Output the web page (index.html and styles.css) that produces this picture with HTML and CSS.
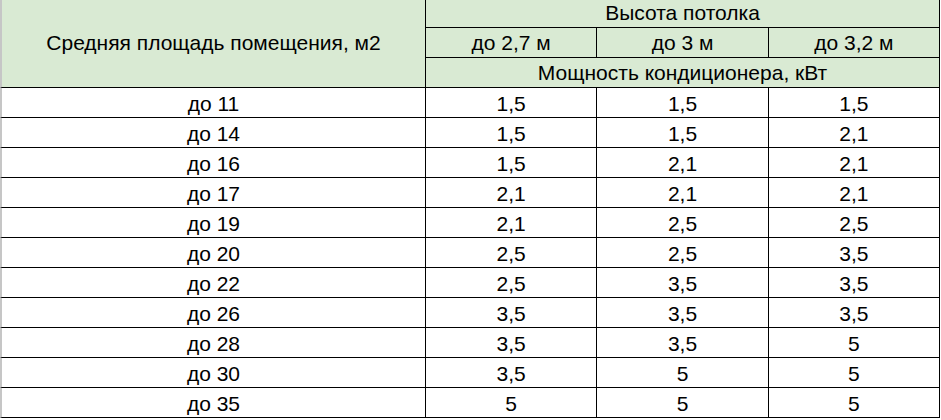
FILE: index.html
```html
<!DOCTYPE html>
<html lang="ru">
<head>
<meta charset="utf-8">
<link rel="stylesheet" href="styles.css">
</head>
<body>
<table class="grid">
  <thead>
    <tr>
      <th class="c1 first" rowspan="3">Средняя площадь помещения, м2</th>
      <th class="hd" colspan="3">Высота потолка</th>
    </tr>
    <tr>
      <th class="hd c2">до 2,7 м</th>
      <th class="hd c3">до 3 м</th>
      <th class="hd c4">до 3,2 м</th>
    </tr>
    <tr>
      <th class="hd" colspan="3">Мощность кондиционера, кВт</th>
    </tr>
  </thead>
  <tbody>
    <tr><td class="first">до 11</td><td>1,5</td><td>1,5</td><td>1,5</td></tr>
    <tr><td class="first">до 14</td><td>1,5</td><td>1,5</td><td>2,1</td></tr>
    <tr><td class="first">до 16</td><td>1,5</td><td>2,1</td><td>2,1</td></tr>
    <tr><td class="first">до 17</td><td>2,1</td><td>2,1</td><td>2,1</td></tr>
    <tr><td class="first">до 19</td><td>2,1</td><td>2,5</td><td>2,5</td></tr>
    <tr><td class="first">до 20</td><td>2,5</td><td>2,5</td><td>3,5</td></tr>
    <tr><td class="first">до 22</td><td>2,5</td><td>3,5</td><td>3,5</td></tr>
    <tr><td class="first">до 26</td><td>3,5</td><td>3,5</td><td>3,5</td></tr>
    <tr><td class="first">до 28</td><td>3,5</td><td>3,5</td><td>5</td></tr>
    <tr><td class="first">до 30</td><td>3,5</td><td>5</td><td>5</td></tr>
    <tr><td class="first">до 35</td><td>5</td><td>5</td><td>5</td></tr>
  </tbody>
</table>
</body>
</html>
```
FILE: styles.css
```css
html, body {
  margin: 0;
  padding: 0;
  background: #ffffff;
}
body {
  font-family: "Liberation Sans", Arial, sans-serif;
  font-size: 21px;
  color: #000000;
}
.grid {
  border-collapse: separate;
  border-spacing: 0;
  table-layout: fixed;
  width: 940px;
  margin-top: -1px;
}
.grid th, .grid td {
  box-sizing: border-box;
  height: 30px;
  padding: 0 4px;
  border-right: 1px solid #000;
  border-bottom: 1px solid #000;
  text-align: center;
  vertical-align: middle;
  font-weight: normal;
  line-height: 22px;
  white-space: nowrap;
}
.grid thead tr:first-child th {
  height: 29px;
}
.grid th {
  background: #d9ead3;
}
.grid .first {
  border-left: 2px solid #c6c6c6;
}
.grid .c1 { width: 426px; }
.grid .c2 { width: 172px; }
.grid .c3 { width: 171px; }
.grid .c4 { width: 171px; }
.grid td {
  padding-top: 2px;
}
```
